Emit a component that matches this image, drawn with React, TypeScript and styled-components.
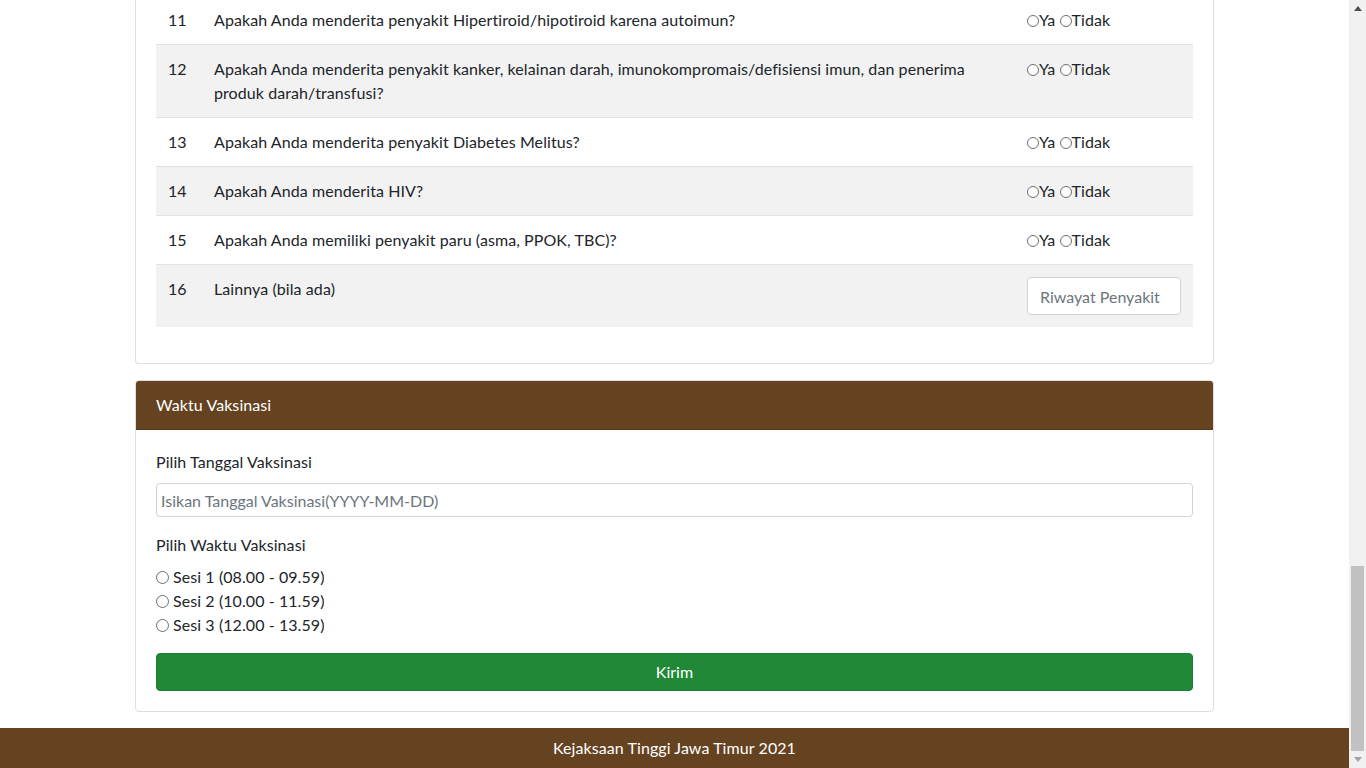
import React from "react";
import styled, { createGlobalStyle } from "styled-components";

const Global = createGlobalStyle`
  html, body { margin: 0; padding: 0; height: 100%; overflow: hidden; }
  body {
    font-family: "Lato", "Open Sans", "Noto Sans", sans-serif;
    font-size: 16px;
    line-height: 24px;
    letter-spacing: 0.08px;
    color: #212529;
    background: #fff;
  }
  * { box-sizing: border-box; }
`;

const brown = "#654321";

const Shell = styled.div`
  display: flex;
  width: 1366px;
  height: 768px;
  overflow: hidden;
`;

const Main = styled.div`
  flex: 1;
  display: flex;
  flex-direction: column;
  margin-top: -4px;
  min-width: 0;
`;

const Container = styled.div`
  width: 1079px;
  margin: 0 auto;
  display: flex;
  flex-direction: column;
  gap: 16px;
`;

const Card = styled.div<{ $open?: boolean }>`
  border: 1px solid #dfdfdf;
  border-top: ${(p) => (p.$open ? "0" : "1px solid #dfdfdf")};
  border-radius: ${(p) => (p.$open ? "0 0 4px 4px" : "4px")};
  background: #fff;
  overflow: hidden;
`;

const CardHeader = styled.div`
  background: ${brown};
  color: #fff;
  padding: 12px 20px;
  border-bottom: 1px solid rgba(0, 0, 0, 0.125);
  line-height: 24px;
`;

const CardBody = styled.div<{ $noTop?: boolean }>`
  padding: ${(p) => (p.$noTop ? "0 20px 20px" : "20px")};
`;

const Table = styled.table`
  width: 100%;
  border-collapse: collapse;
  margin-bottom: 16px;
`;

const Row = styled.tr<{ $striped?: boolean }>`
  background: ${(p) => (p.$striped ? "#f2f2f2" : "transparent")};
`;

const Cell = styled.td<{ $w?: number; $first?: boolean }>`
  padding: 12px;
  vertical-align: top;
  border-top: ${(p) => (p.$first ? "0" : "1px solid #dee2e6")};
  width: ${(p) => (p.$w ? `${p.$w}px` : "auto")};
`;

const Radio = styled.input.attrs({ type: "radio" })`
  appearance: none;
  -webkit-appearance: none;
  width: 12px;
  height: 12px;
  margin: 0;
  border: 1px solid #6f6f6f;
  border-radius: 50%;
  background: #fff;
  vertical-align: -1px;
`;

const SessionRadio = styled(Radio)`
  width: 13px;
  height: 13px;
  margin-right: 4px;
  vertical-align: -1px;
`;

const Choice = styled.span`
  white-space: nowrap;
`;

const SmallInput = styled.input`
  width: 154px;
  height: 38px;
  padding: 6px 12px;
  border: 1px solid #ced4da;
  border-radius: 4px;
  font: inherit;
  color: #495057;
  background: #fff;
  &::placeholder { color: #6c757d; }
`;

const Label = styled.label<{ $gap?: number }>`
  display: block;
  margin-bottom: ${(p) => p.$gap ?? 8}px;
`;

const Group = styled.div`
  margin-bottom: 16px;
`;

const WideInput = styled.input`
  display: block;
  width: 100%;
  height: 34px;
  padding: 4px 4px;
  border: 1px solid #ced4da;
  border-radius: 4px;
  font: inherit;
  background: #fff;
  &::placeholder { color: #6c757d; }
`;

const SessionLine = styled.label`
  display: block;
  line-height: 24px;
`;

const Submit = styled.button`
  display: block;
  width: 100%;
  height: 38px;
  border: 1px solid #1e7e34;
  border-radius: 4px;
  background: #218838;
  color: #fff;
  font: inherit;
  cursor: pointer;
`;

const Footer = styled.footer`
  margin-top: 16px;
  background: ${brown};
  color: #fff;
  text-align: center;
  padding: 8px 0;
  line-height: 24px;
`;

const Scrollbar = styled.div`
  width: 17px;
  background: #f1f1f1;
  display: flex;
  flex-direction: column;
  flex-shrink: 0;
`;

const ArrowBtn = styled.div`
  height: 17px;
  display: flex;
  align-items: center;
  justify-content: center;
`;

const Track = styled.div`
  flex: 1;
  display: flex;
  flex-direction: column;
  justify-content: flex-end;
  padding: 0 2px;
`;

const Thumb = styled.div`
  height: 185px;
  background: #c1c1c1;
`;

type Q = { n: number; text: React.ReactNode; kind?: "radio" | "input" };

const questions: Q[] = [
  { n: 11, text: "Apakah Anda menderita penyakit Hipertiroid/hipotiroid karena autoimun?" },
  {
    n: 12,
    text: (
      <>
        Apakah Anda menderita penyakit kanker, kelainan darah, imunokompromais/defisiensi imun, dan penerima
        <br />
        produk darah/transfusi?
      </>
    ),
  },
  { n: 13, text: "Apakah Anda menderita penyakit Diabetes Melitus?" },
  { n: 14, text: "Apakah Anda menderita HIV?" },
  { n: 15, text: "Apakah Anda memiliki penyakit paru (asma, PPOK, TBC)?" },
  { n: 16, text: "Lainnya (bila ada)", kind: "input" },
];

export default function App() {
  return (
    <>
      <Global />
      <Shell>
        <Main>
          <Container>
            <Card $open>
              <CardBody $noTop>
                <Table>
                  <tbody>
                    {questions.map((q, i) => (
                      <Row key={q.n} $striped={i % 2 === 1}>
                        <Cell $w={46} $first={i === 0}>{q.n}</Cell>
                        <Cell $first={i === 0}>{q.text}</Cell>
                        <Cell $w={178} $first={i === 0}>
                          {q.kind === "input" ? (
                            <SmallInput placeholder="Riwayat Penyakit" />
                          ) : (
                            <Choice>
                              <Radio name={`q${q.n}`} />Ya <Radio name={`q${q.n}`} />Tidak
                            </Choice>
                          )}
                        </Cell>
                      </Row>
                    ))}
                  </tbody>
                </Table>
              </CardBody>
            </Card>
            <Card>
              <CardHeader>Waktu Vaksinasi</CardHeader>
              <CardBody>
                <Group>
                  <Label $gap={9}>Pilih Tanggal Vaksinasi</Label>
                  <WideInput placeholder="Isikan Tanggal Vaksinasi(YYYY-MM-DD)" />
                </Group>
                <Group>
                  <Label>Pilih Waktu Vaksinasi</Label>
                  <SessionLine><SessionRadio name="sesi" />Sesi 1 (08.00 - 09.59)</SessionLine>
                  <SessionLine><SessionRadio name="sesi" />Sesi 2 (10.00 - 11.59)</SessionLine>
                  <SessionLine><SessionRadio name="sesi" />Sesi 3 (12.00 - 13.59)</SessionLine>
                </Group>
                <Submit type="button">Kirim</Submit>
              </CardBody>
            </Card>
          </Container>
          <Footer>Kejaksaan Tinggi Jawa Timur 2021</Footer>
        </Main>
        <Scrollbar>
          <ArrowBtn>
            <svg width="8" height="5" viewBox="0 0 8 5"><path d="M0 5 L4 0 L8 5 Z" fill="#505050" /></svg>
          </ArrowBtn>
          <Track>
            <Thumb />
          </Track>
          <ArrowBtn>
            <svg width="8" height="5" viewBox="0 0 8 5"><path d="M0 0 L8 0 L4 5 Z" fill="#a3a3a3" /></svg>
          </ArrowBtn>
        </Scrollbar>
      </Shell>
    </>
  );
}
